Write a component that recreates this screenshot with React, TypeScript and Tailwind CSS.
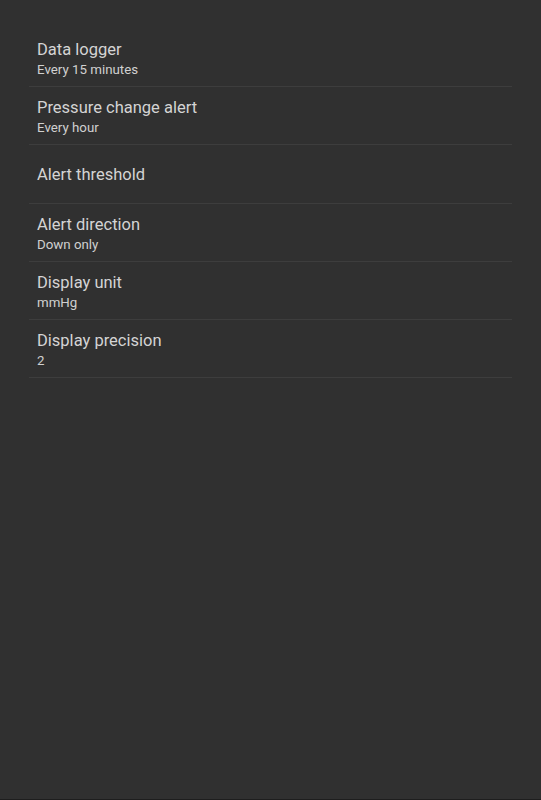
// Settings screen: plain preference list on a dark background.
const prefs: { title: string; summary?: string }[] = [
  { title: "Data logger", summary: "Every 15 minutes" },
  { title: "Pressure change alert", summary: "Every hour" },
  { title: "Alert threshold" },
  { title: "Alert direction", summary: "Down only" },
  { title: "Display unit", summary: "mmHg" },
  { title: "Display precision", summary: "2" },
];

export default function App() {
  return (
    <div className="flex h-[800px] w-full flex-col bg-[#303030] font-['Roboto','Liberation_Sans',sans-serif]">
      <ul className="flex-1 px-[29px] pt-[29px]">
        {prefs.map((p) => (
          <li
            key={p.title}
            className="flex h-[58.2px] flex-col justify-center border-b border-[#3d3d3d] px-2 pt-[3px]"
          >
            <span className="text-[16.5px] leading-[20px] text-[#d4d4d4]">{p.title}</span>
            {p.summary && (
              <span className="mt-[1px] text-[13.3px] leading-[17px] text-[#d0d0d0]">{p.summary}</span>
            )}
          </li>
        ))}
      </ul>
      <div className="h-px bg-[#1e1e1e]" />
    </div>
  );
}
